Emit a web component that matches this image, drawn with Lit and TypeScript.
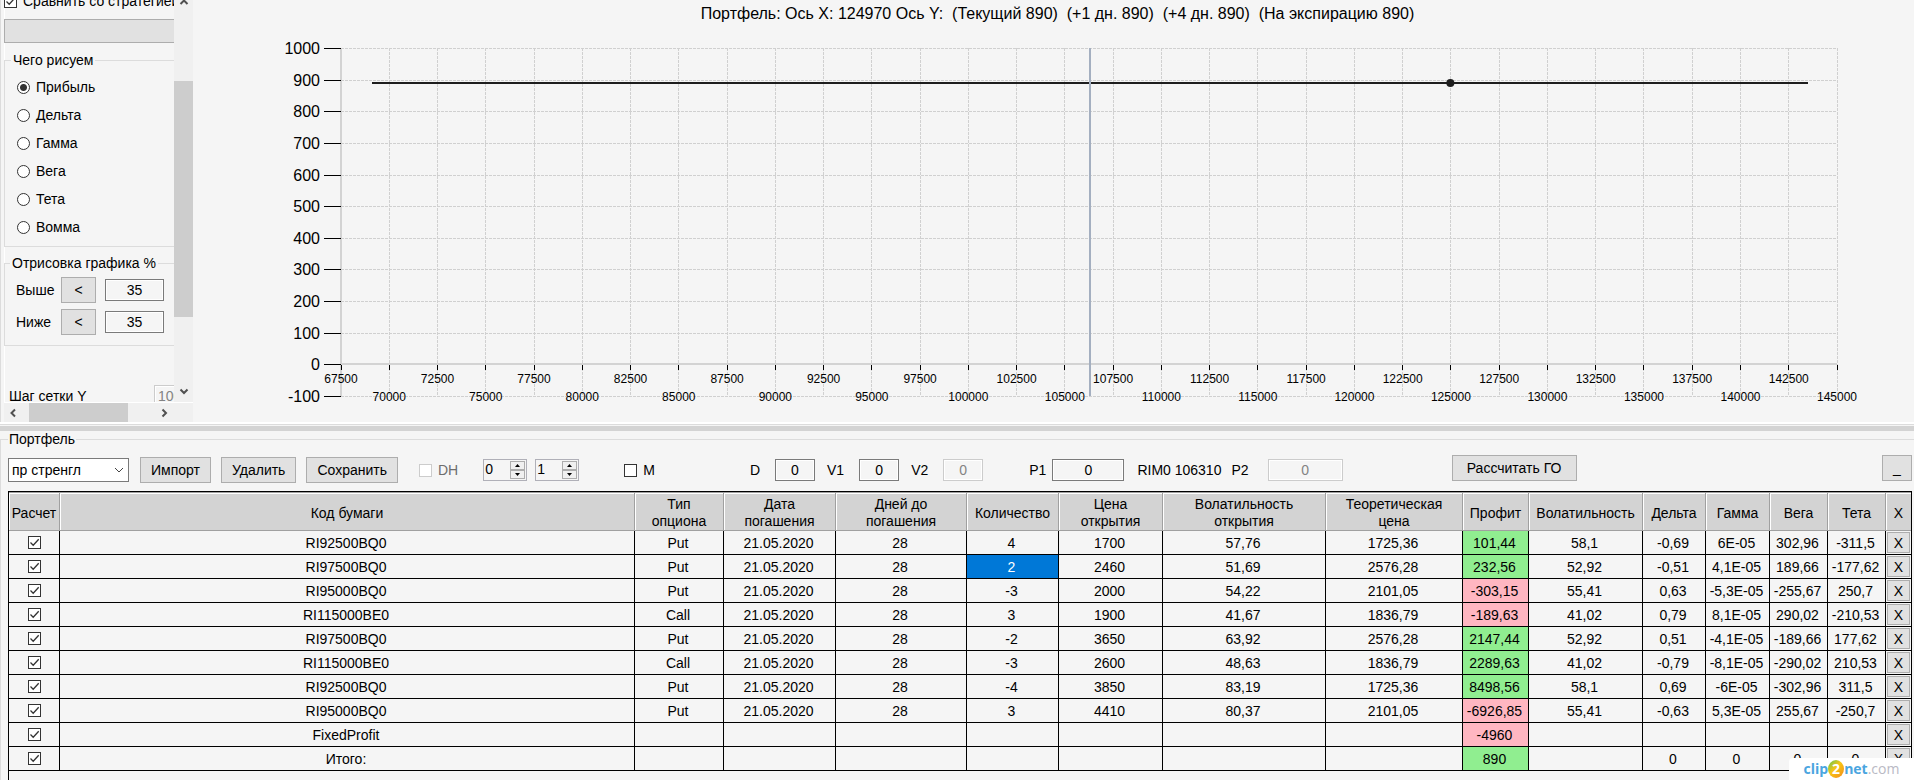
import { LitElement, html, svg, css } from "lit";
import { customElement } from "lit/decorators.js";
import { classMap } from "lit/directives/class-map.js";

const controls = css`
  * { box-sizing: border-box; }
  button, input, select { font: inherit; color: inherit; margin: 0; padding: 0; border-radius: 0; }
  fieldset { margin: 0; padding: 0; min-width: 0; border: 1px solid #dcdcdc; }
  legend { padding: 0 2px; line-height: 16px; }
  button { background: #e1e1e1; border: 1px solid #adadad; height: 26px; }
  .field { height: 22px; border: 1px solid #7a7a7a; background: #f5f5f5; text-align: center; box-shadow: inset 0 0 0 1px #fff; }
  .field:disabled { border-color: #ccc; color: #838383; }
  .check, .radio { appearance: none; width: 13px; height: 13px; border: 1px solid #333; background: #fff; flex: none; }
  .check:checked {
    background: #fff url("data:image/svg+xml,%3Csvg xmlns='http://www.w3.org/2000/svg' viewBox='0 0 11 11'%3E%3Cpath d='M1.5 5.5 4.2 8.2 9.7 2.2' fill='none' stroke='%23333' stroke-width='1.3'/%3E%3C/svg%3E") center / 11px 11px no-repeat;
  }
  .check:disabled { border-color: #ccc; }
  .radio { border-radius: 50%; }
  .radio:checked { background: radial-gradient(circle, #333 0 3px, #fff 4px); }
`;

const chevron = (d: string) => html`<svg class="chevron" viewBox="0 0 10 10" width="10" height="10" aria-hidden="true">
  <path d=${d} fill="none" stroke="#505050" stroke-width="2" /></svg>`;

@customElement("settings-pane")
class SettingsPane extends LitElement {
  static styles = [controls, css`
    :host {
      display: grid; grid-template: 402px 20px / 1fr 19px; padding-left: 3px;
      border-left: 1px solid #dcdcdc; overflow: hidden;
    }
    .content { overflow: hidden; box-shadow: inset 1px 0 #fff; }
    .inner { width: 220px; margin-top: -7px; }
    label { display: flex; align-items: center; white-space: nowrap; }
    .compare { height: 16px; gap: 6px; }
    .strategy { display: block; width: 100%; height: 24px; margin: 10px 0 9px; }
    .metrics { padding: 5px 12px; }
    .metrics label { height: 28px; gap: 6px; }
    .metrics legend, .range legend { margin-left: -6px; }
    .range { margin-top: 8px; padding: 6px 11px 10px; display: grid; gap: 6px; }
    .row { display: flex; align-items: center; }
    .row label { width: 45px; }
    .row button { width: 35px; margin-right: 9px; }
    .row .field { width: 59px; }
    .step { display: flex; align-items: center; margin-top: 37px; padding-left: 5px; }
    .step label { flex: none; width: 145px; height: 26px; }
    .step .field { width: 60px; text-align: left; padding-left: 3px; }
    .vbar, .hbar { background: #f0f0f0; display: flex; align-items: center; overflow: hidden; }
    .vbar { flex-direction: column; }
    .vbar .thumb { width: 100%; height: 236px; margin: 74px 0 69px; background: #cdcdcd; flex: none; }
    .hbar { grid-column: span 2; border-top: 1px solid #fff; }
    .hbar .thumb { width: 99px; height: 100%; margin: 0 31px 0 11px; background: #cdcdcd; }
    .chevron { flex: none; }
    .vbar .chevron:first-child { margin-top: -3px; }
    .hbar .chevron:first-child { margin-left: 4px; }
  `];

  render() {
    const metrics = ["Прибыль", "Дельта", "Гамма", "Вега", "Тета", "Вомма"];
    return html`
      <div class="content"><div class="inner">
        <label class="compare"><input class="check" type="checkbox" checked />Сравнить со стратегией</label>
        <button class="strategy" aria-label="Стратегия"></button>
        <fieldset class="metrics">
          <legend>Чего рисуем</legend>
          ${metrics.map((m, i) => html`<label><input class="radio" type="radio" name="metric" ?checked=${i === 0} />${m}</label>`)}
        </fieldset>
        <fieldset class="range">
          <legend>Отрисовка графика %</legend>
          ${["Выше", "Ниже"].map((n, i) => html`<div class="row">
            <label for="r${i}">${n}</label><button>&lt;</button>
            <input class="field" id="r${i}" value="35" /></div>`)}
        </fieldset>
        <div class="step"><label for="step">Шаг сетки Y</label><input class="field" id="step" value="100" disabled /></div>
      </div></div>
      <div class="vbar">${chevron("M1.5 7 5 3.5 8.5 7")}<div class="thumb"></div>${chevron("M1.5 3.5 5 7 8.5 3.5")}</div>
      <div class="hbar">${chevron("M7 1.5 3.5 5 7 8.5")}<div class="thumb"></div>${chevron("M3.5 1.5 7 5 3.5 8.5")}</div>
    `;
  }
}

@customElement("profit-chart")
class ProfitChart extends LitElement {
  static styles = css`
    :host { display: block; min-width: 0; }
    .title { margin: 0; padding: 4px 0 0 8px; font-size: 16px; font-weight: 400; line-height: 20px; text-align: center; white-space: pre; }
    .plot { padding: 24px 77px 0 148px; }
    svg { display: block; width: 100%; height: 349px; overflow: visible; }
    line { shape-rendering: crispEdges; }
    .grid { stroke: #d0d0d0; stroke-dasharray: 3 1; }
    .axis { stroke: #d3d3d3; stroke-width: 2; }
    .tick { stroke: #000; }
    .now { stroke: #a4afc0; stroke-width: 2; }
    .profit { stroke: #1e1e1e; stroke-width: 2; }
    .dot { fill: #1e1e1e; }
    .ylabel { font-size: 16px; text-anchor: end; }
    .xlabel { font-size: 12px; text-anchor: middle; }
  `;

  private px(v: number) { return `${((v - 67500) / 77500) * 100}%`; }
  private py(v: number) { return Math.round(((1000 - v) / 1100) * 348); }

  render() {
    const ys = Array.from({ length: 12 }, (_, i) => 1000 - i * 100);
    const xs = Array.from({ length: 32 }, (_, i) => 67500 + i * 2500);
    const zero = this.py(0);
    const bottom = this.py(-100);
    return html`
      <h1 class="title">Портфель: Ось X: 124970 Ось Y:  (Текущий 890)  (+1 дн. 890)  (+4 дн. 890)  (На экспирацию 890)</h1>
      <div class="plot"><svg role="img" aria-label="Портфель">
        ${ys.map((v) => svg`<line class="grid" x1="0" x2="100%" y1=${this.py(v)} y2=${this.py(v)} />`)}
        ${xs.map((v) => svg`<line class="grid" x1=${this.px(v)} x2=${this.px(v)} y1="0" y2=${bottom} />`)}
        <line class="axis" x1="0" x2="0" y1="0" y2=${bottom} />
        <line class="axis" x1="0" x2="100%" y1=${zero} y2=${zero} />
        ${ys.map((v) => svg`<line class="tick" x1="-17" x2="0" y1=${this.py(v)} y2=${this.py(v)} />
          <text class="ylabel" x="-21" y=${this.py(v) + 6}>${v}</text>`)}
        ${xs.map((v, i) => svg`<line class="tick" x1=${this.px(v)} x2=${this.px(v)} y1=${zero + 1} y2=${zero + 6} />
          <text class="xlabel" x=${this.px(v)} y=${zero + (i % 2 ? 37 : 19)}>${v}</text>`)}
        <line class="profit" x1=${this.px(69100)} x2=${this.px(143518)} y1=${this.py(890)} y2=${this.py(890)} />
        <line class="now" x1=${this.px(106310)} x2=${this.px(106310)} y1="0" y2=${bottom} />
        <circle class="dot" cx=${this.px(124970)} cy=${this.py(890)} r="4" />
      </svg></div>`;
  }
}

interface Column { title: string; width?: number; }
const columns: Column[] = [
  { title: "Расчет", width: 51 }, { title: "Код бумаги" }, { title: "Тип опциона", width: 89 },
  { title: "Дата погашения", width: 112 }, { title: "Дней до погашения", width: 131 },
  { title: "Количество", width: 92 }, { title: "Цена открытия", width: 104 },
  { title: "Волатильность открытия", width: 163 }, { title: "Теоретическая цена", width: 137 },
  { title: "Профит", width: 66 }, { title: "Волатильность", width: 114 }, { title: "Дельта", width: 63 },
  { title: "Гамма", width: 64 }, { title: "Вега", width: 58 }, { title: "Тета", width: 58 }, { title: "X", width: 25 },
];

const D = "21.05.2020";
const rows: string[][] = [
  ["RI92500BQ0", "Put", D, "28", "4", "1700", "57,76", "1725,36", "101,44", "58,1", "-0,69", "6E-05", "302,96", "-311,5"],
  ["RI97500BQ0", "Put", D, "28", "2", "2460", "51,69", "2576,28", "232,56", "52,92", "-0,51", "4,1E-05", "189,66", "-177,62"],
  ["RI95000BQ0", "Put", D, "28", "-3", "2000", "54,22", "2101,05", "-303,15", "55,41", "0,63", "-5,3E-05", "-255,67", "250,7"],
  ["RI115000BE0", "Call", D, "28", "3", "1900", "41,67", "1836,79", "-189,63", "41,02", "0,79", "8,1E-05", "290,02", "-210,53"],
  ["RI97500BQ0", "Put", D, "28", "-2", "3650", "63,92", "2576,28", "2147,44", "52,92", "0,51", "-4,1E-05", "-189,66", "177,62"],
  ["RI115000BE0", "Call", D, "28", "-3", "2600", "48,63", "1836,79", "2289,63", "41,02", "-0,79", "-8,1E-05", "-290,02", "210,53"],
  ["RI92500BQ0", "Put", D, "28", "-4", "3850", "83,19", "1725,36", "8498,56", "58,1", "0,69", "-6E-05", "-302,96", "311,5"],
  ["RI95000BQ0", "Put", D, "28", "3", "4410", "80,37", "2101,05", "-6926,85", "55,41", "-0,63", "5,3E-05", "255,67", "-250,7"],
  ["FixedProfit", "", "", "", "", "", "", "", "-4960", "", "", "", "", ""],
  ["Итого:", "", "", "", "", "", "", "", "890", "", "0", "0", "0", "0"],
];
const QUANTITY = 4;
const PROFIT = 8;

@customElement("position-table")
class PositionTable extends LitElement {
  static styles = [controls, css`
    :host { display: block; border: solid #000; border-width: 1px 1px 0; overflow: hidden; }
    table { width: 100%; table-layout: fixed; border-collapse: separate; border-spacing: 0; }
    th {
      height: 39px; padding: 3px 0 0; overflow: hidden; font-weight: 400; line-height: 17px; background: #d3d3d3;
      border: solid #a0a0a0; border-width: 1px 1px 1px 0; box-shadow: inset 1px 1px #fff;
    }
    .narrow { padding: 3px 14px 0; }
    td {
      height: 24px; padding: 0 2px 0 0; text-align: center; line-height: 20px; white-space: nowrap;
      border: solid #000; border-width: 0 1px 1px 0;
    }
    td:first-child, td:last-child { padding: 0; }
    td:last-child, th:last-child { border-right: 0; }
    .check { display: block; margin: 0 auto; }
    .up { background: #90ee90; }
    .down { background: #ffb6c1; }
    .selected { background: #0078d7; color: #fff; }
    .remove { display: block; width: calc(100% - 2px); height: 21px; margin: 1px; line-height: 18px; }
  `];

  render() {
    return html`<table>
      <colgroup>${columns.map((c) => html`<col width=${c.width ?? "auto"} />`)}</colgroup>
      <thead><tr>${columns.map((c) => html`<th scope="col" class=${classMap({ narrow: c.title.includes(" ") && !!c.width })}>${c.title}</th>`)}</tr></thead>
      <tbody>${rows.map((r, ri) => html`<tr>
        <td><input class="check" type="checkbox" checked aria-label=${r[0]} /></td>
        ${r.map((v, i) => html`<td class=${classMap({
          up: i === PROFIT && !v.startsWith("-"),
          down: i === PROFIT && v.startsWith("-"),
          selected: i === QUANTITY && ri === 1,
        })}>${v}</td>`)}
        <td><button class="remove">X</button></td>
      </tr>`)}</tbody>
    </table>`;
  }
}

@customElement("portfolio-toolbar")
class PortfolioToolbar extends LitElement {
  static styles = [controls, css`
    :host { display: flex; align-items: center; height: 45px; padding-top: 3px; white-space: nowrap; }
    :host > * { flex: none; }
    .combo {
      appearance: none; width: 121px; height: 24px; padding-left: 3px; border: 1px solid #7a7a7a; margin-right: 11px;
      background: #fff url("data:image/svg+xml,%3Csvg xmlns='http://www.w3.org/2000/svg' viewBox='0 0 10 6'%3E%3Cpath d='M1 1 5 5 9 1' fill='none' stroke='%23444'/%3E%3C/svg%3E") right 4px center / 10px 6px no-repeat;
    }
    .files { display: flex; gap: 10px; }
    .files button { padding: 0 10px; }
    .flag { display: flex; align-items: center; gap: 6px; margin-left: 21px; }
    .off { color: #6d6d6d; }
    .spinners { display: flex; gap: 8px; margin-left: 25px; }
    .spinner { display: flex; width: 44px; height: 22px; border: 1px solid #b0b0b8; padding: 1px; }
    .spinner input { width: 25px; border: 0; background: none; appearance: textfield; height: 16px; }
    .spinner input::-webkit-inner-spin-button { appearance: none; }
    .arrows { display: grid; width: 15px; }
    .arrows button { display: grid; place-items: center; height: 9px; background: #f0f0f0; }
    .multi { margin-left: 45px; }
    .params { display: flex; align-items: center; gap: 12px; margin-left: 95px; }
    .pair { display: flex; align-items: center; gap: 15px; }
    .small { width: 40px; }
    .prices { display: flex; align-items: center; margin-left: 46px; }
    .price { width: 72px; margin: 0 13px 0 6px; }
    .second { margin-left: 10px; }
    .locked { width: 75px; margin-left: 19px; }
    :host > .actions { display: flex; flex: 1; justify-content: space-between; padding-bottom: 4px; margin-left: 109px; }
    .margin { width: 125px; }
    .fold { width: 30px; }
  `];

  private spinner(name: string, value: number) {
    return html`<div class="spinner"><input type="number" aria-label=${name} .value=${String(value)} />
      <div class="arrows">
        <button aria-label="Больше"><svg width="5" height="3"><path d="M0 3 2.5 0 5 3z" /></svg></button>
        <button aria-label="Меньше"><svg width="5" height="3"><path d="M0 0 2.5 3 5 0z" /></svg></button>
      </div></div>`;
  }

  private pair(name: string, disabled = false) {
    return html`<div class="pair"><label for=${name}>${name}</label>
      <input class="field small" id=${name} value="0" ?disabled=${disabled} /></div>`;
  }

  render() {
    return html`
      <select class="combo" aria-label="Стратегия"><option>пр стренгл</option></select>
      <div class="files"><button>Импорт</button><button>Удалить</button><button>Сохранить</button></div>
      <label class="flag off"><input class="check" type="checkbox" disabled />DH</label>
      <div class="spinners">${this.spinner("DH 1", 0)}${this.spinner("DH 2", 1)}</div>
      <label class="flag multi"><input class="check" type="checkbox" />M</label>
      <div class="params">${this.pair("D")}${this.pair("V1")}${this.pair("V2", true)}</div>
      <div class="prices">
        <label for="p1">P1</label><input class="field price" id="p1" value="0" />
        <span>RIM0 106310</span>
        <label class="second" for="p2">P2</label><input class="field locked" id="p2" value="0" disabled />
      </div>
      <div class="actions"><button class="margin">Рассчитать ГО</button><button class="fold">_</button></div>
    `;
  }
}

@customElement("app-root")
class AppRoot extends LitElement {
  static styles = [controls, css`
    :host {
      display: flex; flex-direction: column; height: 100vh; overflow: hidden; position: relative;
      background: #f5f5f5; color: #000; font: 14px/16px "Liberation Sans", Arial, sans-serif;
    }
    .top { display: grid; grid-template-columns: 193px 1fr; flex: none; }
    .splitter { flex: none; height: 10px; border: solid #fff; border-width: 2px 0 0; background: linear-gradient(#dcdcdc 0 1px, #f5f5f5 1px 2px, #d3d3d3 2px 7px, #f5f5f5 7px); }
    .portfolio { flex: 1; min-height: 0; display: flex; flex-direction: column; padding: 0 2px 0 7px; border-width: 1px 0 0 1px; }
    .portfolio legend { line-height: 14px; padding: 0 1px; }
    portfolio-toolbar { flex: none; }
    position-table { flex: 1; min-height: 0; }
    .mark {
      position: absolute; right: 0; bottom: 0; display: flex; align-items: center; justify-content: center;
      width: 125px; height: 22px; background: #fff; border-top-left-radius: 4px;
      font: 700 14px/20px "Open Sans", sans-serif; color: #4aa5e0;
    }
    .ball {
      width: 16px; height: 18px; border-radius: 50%; color: #fff; text-align: center; line-height: 18px;
      background: linear-gradient(135deg, #8cc63f 15%, #f9c513 45%, #f28a1c);
    }
    .com { font-weight: 400; color: #b9b9c4; }
  `];

  render() {
    return html`
      <div class="top"><settings-pane></settings-pane><profit-chart></profit-chart></div>
      <div class="splitter"></div>
      <fieldset class="portfolio">
        <legend>Портфель</legend>
        <portfolio-toolbar></portfolio-toolbar>
        <position-table></position-table>
      </fieldset>
      <div class="mark"><span>clip</span><span class="ball">2</span><span>net</span><span class="com">.com</span></div>
    `;
  }
}
